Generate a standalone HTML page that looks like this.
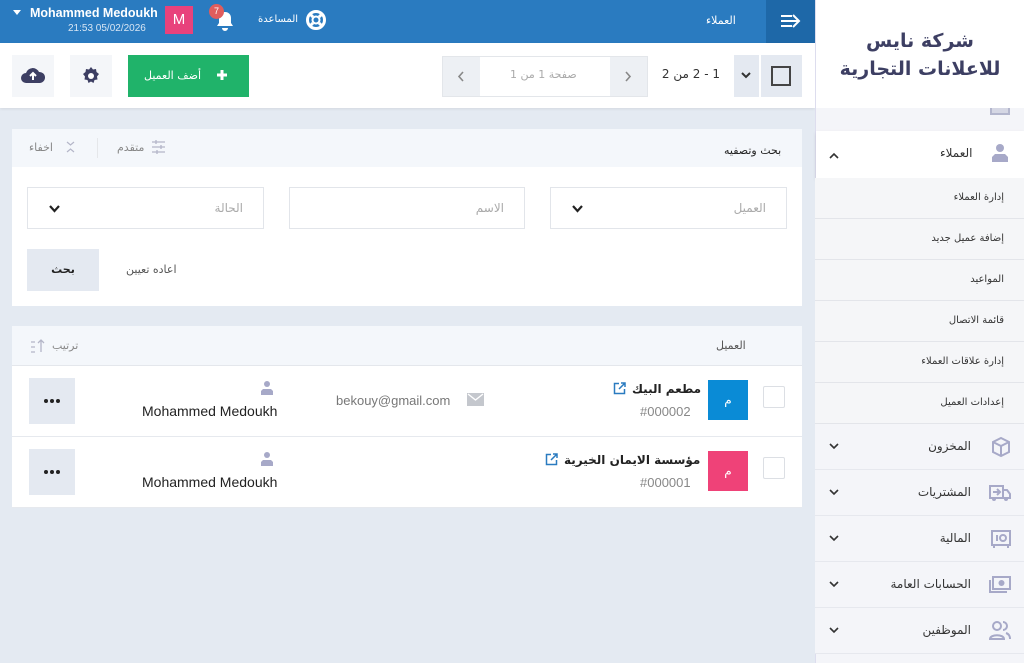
<!DOCTYPE html>
<html><head><meta charset="utf-8"><style>
*{box-sizing:border-box;margin:0;padding:0}
body{width:1024px;height:663px;overflow:hidden;background:#e4eaf2;font-family:"Liberation Sans","Noto Sans CJK SC",sans-serif;position:relative;font-size:12px;color:#222}
.a{position:absolute;white-space:nowrap}
.ar{font-family:"DejaVu Sans","Noto Sans CJK SC",sans-serif;direction:rtl}
.sb{background:#f4f5f9}
.mi{position:absolute;left:815px;width:209px;height:46px;border-bottom:1px solid #e6e8ee;background:#f4f5f9}
.mi .t{position:absolute;right:53px;top:15px;font-size:12px;color:#333}
.mi .c{position:absolute;left:14px;top:19px}
.mi .ic{position:absolute;right:12px;top:12px}
.sub{position:absolute;left:815px;width:209px;height:41px;border-bottom:1px solid #e3e5ea;background:#f5f6f8}
.sub span{position:absolute;right:20px;top:14px;font-size:10px;color:#333}
.sel{position:absolute;top:187px;height:42px;background:#fff;border:1px solid #e2e5ea}
.sel .p{position:absolute;right:20px;top:13px;color:#aaa;font-size:12px}
.sel .v{position:absolute;left:21px;top:17px}
.row{position:absolute;left:12px;width:790px;height:71px;background:#fff;border-bottom:1px solid #e6e9ee}
.dots{position:absolute;width:46px;height:46px;background:#e4e9f1}
.dots i{position:absolute;top:21px;width:4px;height:4px;border-radius:50%;background:#222}
</style></head><body>
<!-- top bar -->
<div class="a" style="left:0;top:0;width:815px;height:43px;background:#2a7bc0"></div>
<div class="a" style="left:766px;top:0;width:49px;height:43px;background:#1e68a8"></div>
<svg class="a" style="left:780px;top:12px" width="22" height="18" viewBox="0 0 22 18"><path d="M1 4h11M1 9h17M1 14h11M13 3l6 6-6 6" stroke="#fff" stroke-width="2" fill="none"/></svg>
<div class="a ar" style="left:706px;top:14px;color:#fff;font-size:11px">العملاء</div>
<svg class="a" style="left:13px;top:10px" width="8" height="5" viewBox="0 0 8 5"><path d="M0 0h8L4 5z" fill="#fff"/></svg>
<div class="a" style="left:30px;top:6px;color:#fff;font-size:12.5px;font-weight:bold">Mohammed Medoukh</div>
<div class="a" style="left:68px;top:23px;color:#d8e6f4;font-size:10px">21:53 05/02/2026</div>
<div class="a" style="left:165px;top:6px;width:28px;height:28px;background:#e8427c;color:#fff;font-size:15px;text-align:center;line-height:28px">M</div>
<svg class="a" style="left:214px;top:10px" width="22" height="22" viewBox="0 0 22 22"><path d="M11 2c-4 0-6 3-6 6v5l-2 3h16l-2-3V8c0-3-2-6-6-6zM8 18a3 3 0 0 0 6 0z" fill="#fff"/></svg>
<div class="a" style="left:209px;top:4px;width:15px;height:15px;border-radius:50%;background:#e05d5d;color:#fff;font-size:9px;text-align:center;line-height:15px">7</div>
<div class="a ar" style="left:258px;top:14px;color:#fff;font-size:10px">المساعدة</div>
<svg class="a" style="left:305px;top:9px" width="22" height="22" viewBox="0 0 22 22"><circle cx="11" cy="11" r="8.5" stroke="#fff" stroke-width="3" fill="none"/><circle cx="11" cy="11" r="3.5" stroke="#fff" stroke-width="2" fill="none"/><path d="M5 5l3 3M17 5l-3 3M5 17l3-3M17 17l-3-3" stroke="#fff" stroke-width="3"/></svg>
<!-- toolbar -->
<div class="a" style="left:0;top:43px;width:815px;height:65px;background:#fff;box-shadow:0 1px 3px rgba(0,0,0,.08)"></div>
<div class="a" style="left:12px;top:55px;width:42px;height:42px;background:#f4f6f9"></div>
<svg class="a" style="left:20px;top:64px" width="26" height="22" viewBox="0 0 26 22"><path d="M6 19a5 5 0 0 1 0-10 7 7 0 0 1 13-1 5.5 5.5 0 0 1 1 11z" fill="#3d3f63"/><path d="M13 16V9M10 12l3-3 3 3" stroke="#fff" stroke-width="2" fill="none"/></svg>
<div class="a" style="left:70px;top:55px;width:42px;height:42px;background:#f4f6f9"></div>
<svg class="a" style="left:81px;top:66px" width="20" height="20" viewBox="0 0 20 20"><path d="M10 1l2 2.5 3-.5.5 3 2.5 2-2 2.5.5 3-3 .5-1 3-2.5-1.5-2.5 1.5-1-3-3-.5.5-3-2-2.5 2.5-2 .5-3 3 .5z" fill="#3d3f63"/><circle cx="10" cy="10" r="3" fill="#fff"/></svg>
<div class="a" style="left:128px;top:55px;width:121px;height:42px;background:#20b36a"></div>
<div class="a ar" style="left:144px;top:69px;color:#fff;font-size:11px">أضف العميل</div>
<svg class="a" style="left:216px;top:69px" width="12" height="12" viewBox="0 0 12 12"><path d="M6 1v10M1 6h10" stroke="#fff" stroke-width="3"/></svg>
<div class="a" style="left:442px;top:56px;width:206px;height:41px;border:1px solid #e3e6ea"></div>
<div class="a" style="left:443px;top:57px;width:37px;height:39px;background:#edf0f4"></div>
<svg class="a" style="left:457px;top:71px" width="8" height="11" viewBox="0 0 8 11"><path d="M6 1L2 5.5 6 10" stroke="#888" stroke-width="1.6" fill="none"/></svg>
<div class="a" style="left:610px;top:57px;width:37px;height:39px;background:#edf0f4"></div>
<svg class="a" style="left:624px;top:71px" width="8" height="11" viewBox="0 0 8 11"><path d="M2 1l4 4.5L2 10" stroke="#888" stroke-width="1.6" fill="none"/></svg>
<div class="a ar" style="left:510px;top:68px;color:#aaa;font-size:11px">صفحة 1 من 1</div>
<div class="a ar" style="left:650px;top:67px;color:#333;font-size:12px;width:70px">1 - 2 من 2</div>
<div class="a" style="left:734px;top:55px;width:68px;height:42px;background:#e4e9f1"></div>
<div class="a" style="left:759px;top:55px;width:2px;height:42px;background:#fff"></div>
<svg class="a" style="left:741px;top:72px" width="10" height="7" viewBox="0 0 10 7"><path d="M1 1l4 4 4-4" stroke="#333" stroke-width="2" fill="none"/></svg>
<div class="a" style="left:771px;top:66px;width:20px;height:20px;border:2px solid #444"></div>
<!-- sidebar -->
<div class="a sb" style="left:815px;top:0;width:209px;height:663px;border-left:1px solid #dde"></div>
<div class="a" style="left:990px;top:101px;width:20px;height:14px;border:2px solid #b3b6cd;border-top:none;background:#d5d7e4"></div>
<div class="a" style="left:940px;top:104px;width:30px;height:4px;background:#555"></div>
<div class="a" style="left:816px;top:0;width:208px;height:108px;background:#fff"></div>
<div class="a ar" style="left:820px;top:27px;width:200px;text-align:center;font-size:19px;font-weight:bold;color:#3d3f63;line-height:28px">شركة نايس<br>للاعلانات التجارية</div>
<div class="a" style="left:816px;top:131px;width:208px;height:47px;background:#fff;box-shadow:0 2px 4px rgba(0,0,0,.1)"></div>
<div class="a ar" style="left:940px;top:146px;font-size:12px;color:#333">العملاء</div>
<svg class="a" style="left:829px;top:152px" width="10" height="7" viewBox="0 0 10 7"><path d="M1 6l4-4 4 4" stroke="#333" stroke-width="1.6" fill="none"/></svg>
<svg class="a" style="left:990px;top:143px" width="20" height="20" viewBox="0 0 20 20"><circle cx="10" cy="5" r="4" fill="#a7a9c8"/><path d="M2 19v-5l3-3h10l3 3v5z" fill="#a7a9c8"/></svg>
<div class="sub ar" style="top:178px"><span>إدارة العملاء</span></div>
<div class="sub ar" style="top:219px"><span>إضافة عميل جديد</span></div>
<div class="sub ar" style="top:260px"><span>المواعيد</span></div>
<div class="sub ar" style="top:301px"><span>قائمة الاتصال</span></div>
<div class="sub ar" style="top:342px"><span>إدارة علاقات العملاء</span></div>
<div class="sub ar" style="top:383px"><span>إعدادات العميل</span></div>
<div class="mi ar" style="top:424px"><span class="t">المخزون</span><svg class="c" width="10" height="7" viewBox="0 0 10 7"><path d="M1 1l4 4 4-4" stroke="#333" stroke-width="1.6" fill="none"/></svg><svg class="ic" width="22" height="22" viewBox="0 0 22 22"><path d="M11 2l8 4v10l-8 4-8-4V6zM3 6l8 4 8-4M11 10v10" stroke="#a7a9c8" stroke-width="2" fill="none"/></svg></div>
<div class="mi ar" style="top:470px"><span class="t">المشتريات</span><svg class="c" width="10" height="7" viewBox="0 0 10 7"><path d="M1 1l4 4 4-4" stroke="#333" stroke-width="1.6" fill="none"/></svg><svg class="ic" width="24" height="22" viewBox="0 0 24 22"><path d="M2 4h13v12H2zM15 8h4l3 4v4h-7M5 10h7M9 7l3 3-3 3" stroke="#a7a9c8" stroke-width="2" fill="none"/><circle cx="6" cy="17" r="2" fill="#a7a9c8"/><circle cx="18" cy="17" r="2" fill="#a7a9c8"/></svg></div>
<div class="mi ar" style="top:516px"><span class="t">المالية</span><svg class="c" width="10" height="7" viewBox="0 0 10 7"><path d="M1 1l4 4 4-4" stroke="#333" stroke-width="1.6" fill="none"/></svg><svg class="ic" width="22" height="22" viewBox="0 0 22 22"><rect x="2" y="3" width="18" height="14" stroke="#a7a9c8" stroke-width="2" fill="none"/><circle cx="13" cy="10" r="3" stroke="#a7a9c8" stroke-width="2" fill="none"/><path d="M7 7v6M4 17v3M18 17v3" stroke="#a7a9c8" stroke-width="2"/></svg></div>
<div class="mi ar" style="top:562px"><span class="t">الحسابات العامة</span><svg class="c" width="10" height="7" viewBox="0 0 10 7"><path d="M1 1l4 4 4-4" stroke="#333" stroke-width="1.6" fill="none"/></svg><svg class="ic" width="24" height="22" viewBox="0 0 24 22"><rect x="5" y="3" width="17" height="12" stroke="#a7a9c8" stroke-width="2" fill="none"/><circle cx="13.5" cy="9" r="3" fill="#a7a9c8"/><path d="M2 6v12h17" stroke="#a7a9c8" stroke-width="2" fill="none"/></svg></div>
<div class="mi ar" style="top:608px"><span class="t">الموظفين</span><svg class="c" width="10" height="7" viewBox="0 0 10 7"><path d="M1 1l4 4 4-4" stroke="#333" stroke-width="1.6" fill="none"/></svg><svg class="ic" width="24" height="22" viewBox="0 0 24 22"><circle cx="9" cy="6" r="4" stroke="#a7a9c8" stroke-width="2" fill="none"/><path d="M2 19c0-5 14-5 14 0z" stroke="#a7a9c8" stroke-width="2" fill="none"/><path d="M15 2a4 4 0 0 1 0 8M18 13c3 1 4 3 4 6" stroke="#a7a9c8" stroke-width="2" fill="none"/></svg></div>
<!-- filter panel -->
<div class="a" style="left:12px;top:129px;width:790px;height:177px;background:#fff"></div>
<div class="a" style="left:12px;top:129px;width:790px;height:38px;background:#f4f7fb"></div>
<div class="a ar" style="left:724px;top:144px;font-size:11px;color:#222">بحث وتصفيه</div>
<div class="a ar" style="left:117px;top:141px;font-size:11px;color:#888">متقدم</div>
<svg class="a" style="left:151px;top:140px" width="15" height="14" viewBox="0 0 15 14"><path d="M1 2h13M1 7h13M1 12h13M5 0v4M10 5v4M6 10v4" stroke="#b4b6c8" stroke-width="1.3"/></svg>
<div class="a" style="left:97px;top:138px;width:1px;height:20px;background:#e5e7ea"></div>
<div class="a ar" style="left:29px;top:141px;font-size:11px;color:#888">اخفاء</div>
<svg class="a" style="left:66px;top:141px" width="9" height="12" viewBox="0 0 9 12"><path d="M1 1l3.5 3 3.5-3M1 11l3.5-3 3.5 3" stroke="#b4b6c8" stroke-width="1.2" fill="none"/></svg>
<div class="sel ar" style="left:27px;width:237px"><span class="p">الحالة</span><svg class="v" width="11" height="8" viewBox="0 0 11 8"><path d="M1 1l4.5 5L10 1" stroke="#222" stroke-width="2.2" fill="none"/></svg></div>
<div class="sel ar" style="left:289px;width:236px"><span class="p">الاسم</span></div>
<div class="sel ar" style="left:550px;width:237px"><span class="p">العميل</span><svg class="v" width="11" height="8" viewBox="0 0 11 8"><path d="M1 1l4.5 5L10 1" stroke="#222" stroke-width="2.2" fill="none"/></svg></div>
<div class="a ar" style="left:27px;top:249px;width:72px;height:42px;background:#e4e9f1;text-align:center;line-height:42px;font-size:11px;font-weight:bold">بحث</div>
<div class="a ar" style="left:126px;top:263px;font-size:11px;color:#555">اعاده تعيين</div>
<!-- list -->
<div class="a" style="left:12px;top:326px;width:790px;height:40px;background:#f4f7fb;border-bottom:1px solid #e4e7ec"></div>
<div class="a ar" style="left:716px;top:339px;font-size:11px;color:#555">العميل</div>
<div class="a ar" style="left:52px;top:339px;font-size:11px;color:#888">ترتيب</div>
<svg class="a" style="left:30px;top:339px" width="16" height="14" viewBox="0 0 16 14"><path d="M11 13V1M8 4l3-3 3 3M1 3h4M1 8h4M1 13h4" stroke="#b4b6c8" stroke-width="1.3" fill="none"/></svg>
<div class="row" style="top:366px"></div>
<div class="row" style="top:437px"></div>
<div class="a" style="left:763px;top:386px;width:22px;height:22px;border:1px solid #dcdfe4;border-radius:2px"></div>
<div class="a" style="left:763px;top:457px;width:22px;height:22px;border:1px solid #dcdfe4;border-radius:2px"></div>
<div class="a ar" style="left:708px;top:380px;width:40px;height:40px;background:#0a8bd6;color:#fff;text-align:center;line-height:40px;font-size:12px">م</div>
<div class="a ar" style="left:708px;top:451px;width:40px;height:40px;background:#ef4278;color:#fff;text-align:center;line-height:40px;font-size:12px">م</div>
<div class="a ar" style="left:632px;top:382px;font-size:12px;font-weight:bold">مطعم البيك</div>
<svg class="a" style="left:613px;top:382px" width="13" height="13" viewBox="0 0 13 13"><path d="M6 1.5H1.5v10h10V7M8 1h4v4M12 1L6 7" stroke="#2a7bc0" stroke-width="1.5" fill="none"/></svg>
<div class="a" style="left:640px;top:404px;font-size:13px;color:#888">#000002</div>
<div class="a ar" style="left:564px;top:453px;font-size:12px;font-weight:bold">مؤسسة الايمان الخيرية</div>
<svg class="a" style="left:545px;top:453px" width="13" height="13" viewBox="0 0 13 13"><path d="M6 1.5H1.5v10h10V7M8 1h4v4M12 1L6 7" stroke="#2a7bc0" stroke-width="1.5" fill="none"/></svg>
<div class="a" style="left:640px;top:475px;font-size:13px;color:#888">#000001</div>
<div class="a" style="left:336px;top:393px;font-size:13px;color:#777">bekouy@gmail.com</div>
<svg class="a" style="left:467px;top:393px" width="17" height="13" viewBox="0 0 17 13"><rect width="17" height="13" fill="#c4c7cd"/><path d="M1 1l7.5 6L16 1" stroke="#fff" stroke-width="1.4" fill="none"/></svg>
<svg class="a" style="left:260px;top:380px" width="14" height="16" viewBox="0 0 14 16"><circle cx="7" cy="4" r="3" fill="#a7a9c8"/><path d="M1 15v-4l2-2h8l2 2v4z" fill="#a7a9c8"/></svg>
<svg class="a" style="left:260px;top:451px" width="14" height="16" viewBox="0 0 14 16"><circle cx="7" cy="4" r="3" fill="#a7a9c8"/><path d="M1 15v-4l2-2h8l2 2v4z" fill="#a7a9c8"/></svg>
<div class="a" style="left:142px;top:403px;font-size:14px;color:#222">Mohammed Medoukh</div>
<div class="a" style="left:142px;top:474px;font-size:14px;color:#222">Mohammed Medoukh</div>
<div class="dots" style="left:29px;top:378px"><i style="left:15px"></i><i style="left:21px"></i><i style="left:27px"></i></div>
<div class="dots" style="left:29px;top:449px"><i style="left:15px"></i><i style="left:21px"></i><i style="left:27px"></i></div>
</body></html>
